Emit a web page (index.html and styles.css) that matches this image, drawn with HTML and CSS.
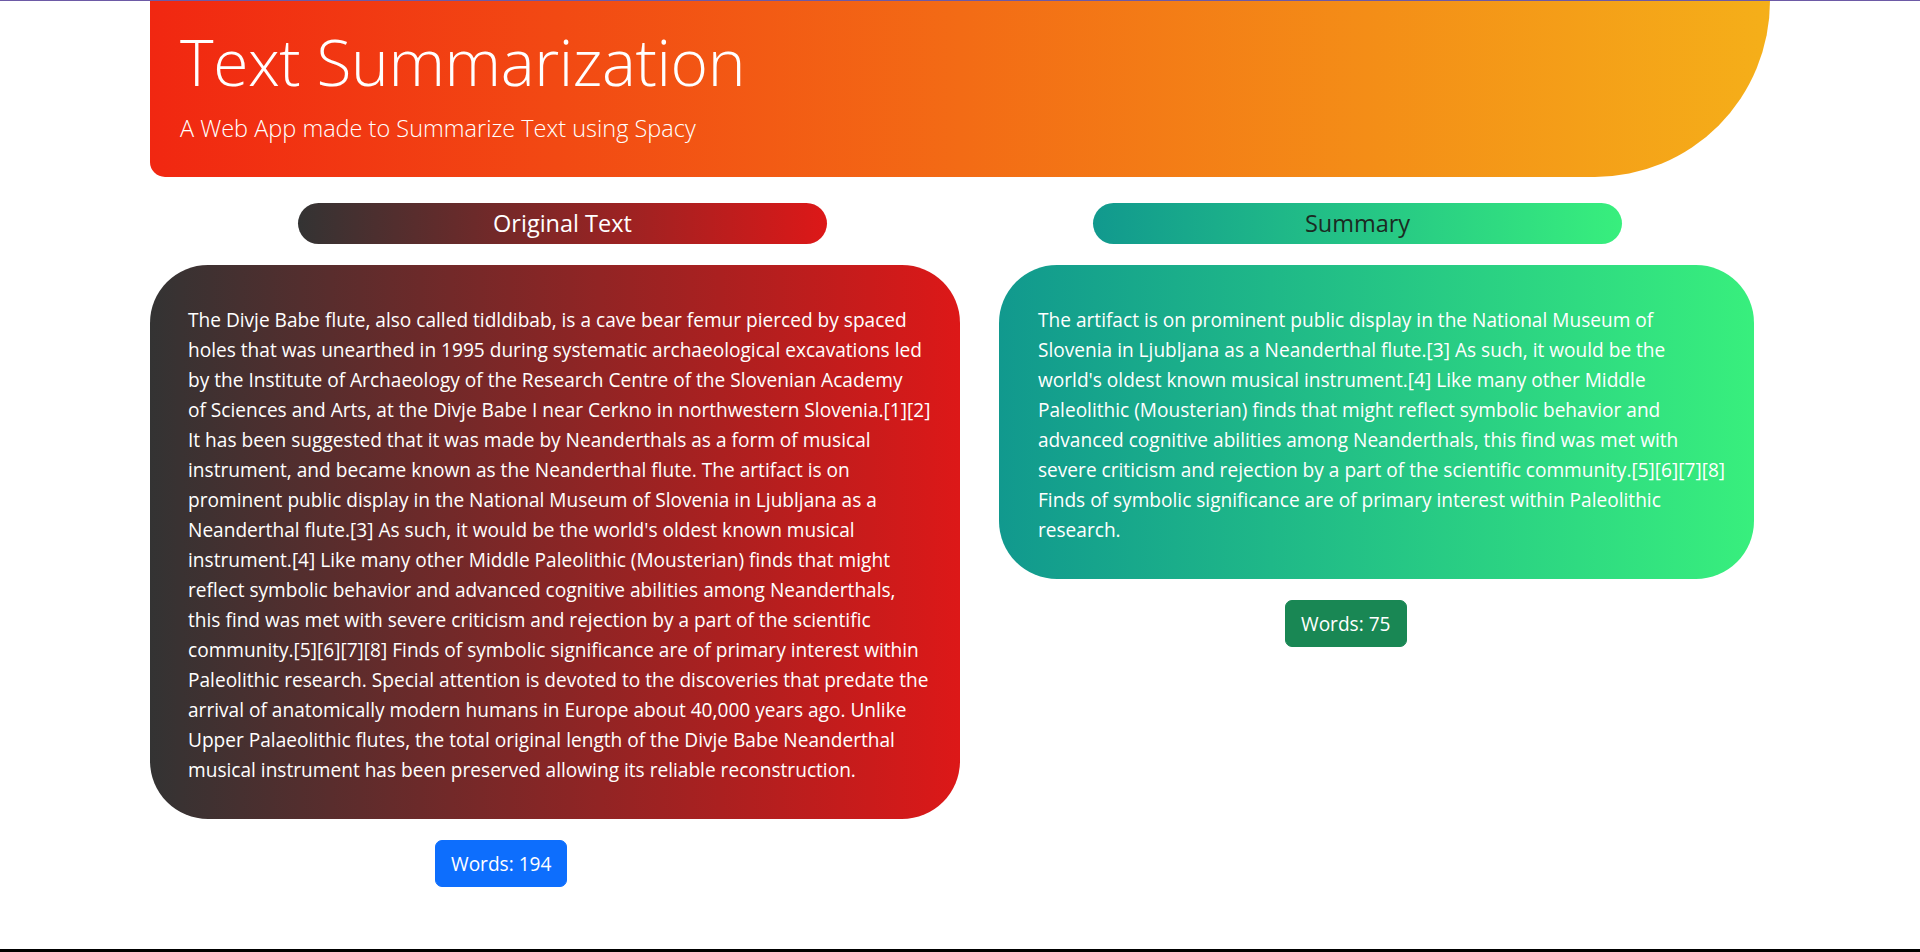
FILE: index.html
```html
<!DOCTYPE html>
<html lang="en">
<head>
<meta charset="utf-8">
<title>Text Summarization</title>
<link rel="stylesheet" href="styles.css">
</head>
<body>
<div class="page">
  <div class="container">
    <header class="hero">
      <h1 class="hero-title">Text Summarization</h1>
      <p class="hero-lead">A Web App made to Summarize Text using Spacy</p>
    </header>
    <div class="columns">
      <section class="col col-original">
        <h2 class="pill pill-original">Original Text</h2>
        <div class="card card-original">
          <p class="card-text">The Divje Babe flute, also called tidldibab, is a cave bear femur pierced by spaced<br>holes that was unearthed in 1995 during systematic archaeological excavations led<br>by the Institute of Archaeology of the Research Centre of the Slovenian Academy<br>of Sciences and Arts, at the Divje Babe I near Cerkno in northwestern Slovenia.[1][2]<br>It has been suggested that it was made by Neanderthals as a form of musical<br>instrument, and became known as the Neanderthal flute. The artifact is on<br>prominent public display in the National Museum of Slovenia in Ljubljana as a<br>Neanderthal flute.[3] As such, it would be the world's oldest known musical<br>instrument.[4] Like many other Middle Paleolithic (Mousterian) finds that might<br>reflect symbolic behavior and advanced cognitive abilities among Neanderthals,<br>this find was met with severe criticism and rejection by a part of the scientific<br>community.[5][6][7][8] Finds of symbolic significance are of primary interest within<br>Paleolithic research. Special attention is devoted to the discoveries that predate the<br>arrival of anatomically modern humans in Europe about 40,000 years ago. Unlike<br>Upper Palaeolithic flutes, the total original length of the Divje Babe Neanderthal<br>musical instrument has been preserved allowing its reliable reconstruction.</p>
        </div>
        <button class="count count-blue" type="button">Words: 194</button>
      </section>
      <section class="col col-summary">
        <h2 class="pill pill-summary">Summary</h2>
        <div class="card card-summary">
          <p class="card-text">The artifact is on prominent public display in the National Museum of<br>Slovenia in Ljubljana as a Neanderthal flute.[3] As such, it would be the<br>world's oldest known musical instrument.[4] Like many other Middle<br>Paleolithic (Mousterian) finds that might reflect symbolic behavior and<br>advanced cognitive abilities among Neanderthals, this find was met with<br>severe criticism and rejection by a part of the scientific community.[5][6][7][8]<br>Finds of symbolic significance are of primary interest within Paleolithic<br>research.</p>
        </div>
        <button class="count count-green" type="button">Words: 75</button>
      </section>
    </div>
  </div>
</div>
</body>
</html>
```

FILE: styles.css
```css
* {
  box-sizing: border-box;
}

html, body {
  margin: 0;
  padding: 0;
  background: #ffffff;
}

body {
  font-family: "Open Sans", "Noto Sans", "DejaVu Sans", sans-serif;
  color: #212529;
}

.page {
  min-height: 100vh;
  border-top: 1px solid #6d5aa6;
  border-bottom: 3px solid #000000;
}

.container {
  width: 1620px;
  margin: 0 auto;
}

.hero {
  background: linear-gradient(to right, #f12711, #f5af19);
  color: #ffffff;
  padding: 21px 30px 31px 30px;
  border-radius: 0 0 175px 15px / 0 0 176px 15px;
}

.hero-title {
  margin: 0;
  font-size: 64px;
  font-weight: 300;
  letter-spacing: -0.4px;
  line-height: 80px;
}

.hero-lead {
  margin: 9px 0 0 0;
  font-size: 23.5px;
  font-weight: 300;
  line-height: 35px;
}

.columns {
  display: flex;
  align-items: flex-start;
  gap: 39px;
  margin-top: 26px;
}

.col {
  display: flex;
  flex-direction: column;
  align-items: flex-start;
}

.col-original {
  width: 810px;
}

.col-summary {
  width: 755px;
}

.pill {
  margin: 0;
  width: 529px;
  height: 41px;
  border-radius: 20.5px;
  display: flex;
  align-items: center;
  justify-content: center;
  font-size: 23.5px;
  font-weight: 400;
  line-height: 1;
}

.pill-original {
  margin-left: 148px;
  background: linear-gradient(to right, #333333, #dd1818);
  color: #ffffff;
}

.pill-summary {
  margin-left: 94px;
  background: linear-gradient(to right, #11998e, #38ef7d);
  color: #1b2a22;
}

.card {
  width: 100%;
  margin-top: 21px;
  border-radius: 58px;
  color: #ffffff;
}

.card-original {
  background: linear-gradient(to right, #333333, #dd1818);
  padding: 40px 20px 34px 38px;
}

.card-summary {
  background: linear-gradient(to right, #11998e, #38ef7d);
  padding: 40px 20px 34px 39px;
}

.card-text {
  margin: 0;
  font-size: 19.1px;
  line-height: 30px;
  white-space: nowrap;
}

.count {
  margin-top: 21px;
  margin-left: 285px;
  height: 47px;
  padding: 0 15px;
  border: 1px solid transparent;
  border-radius: 7px;
  font-family: "Open Sans", "Noto Sans", sans-serif;
  font-size: 19.1px;
  line-height: 30px;
  color: #ffffff;
  cursor: pointer;
}

.count-blue {
  background: #0d6efd;
  border-color: #0d6efd;
}

.count-green {
  margin-left: 286px;
  background: #198754;
  border-color: #198754;
}
```
